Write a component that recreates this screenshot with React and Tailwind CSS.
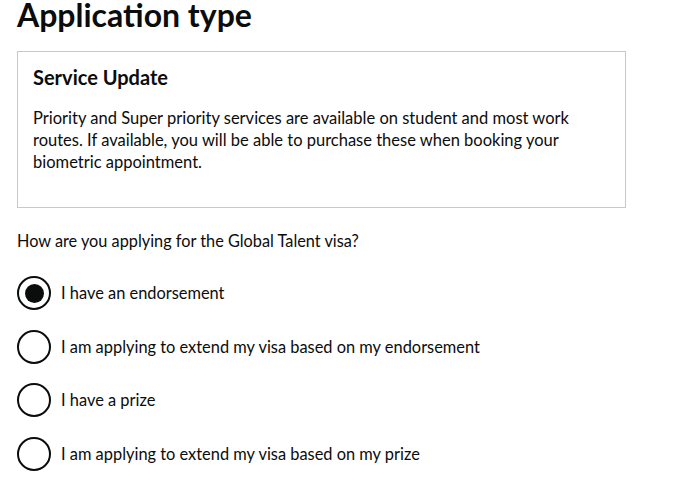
export default function App() {
  const options = [
    { label: "I have an endorsement", checked: true },
    { label: "I am applying to extend my visa based on my endorsement" },
    { label: "I have a prize" },
    { label: "I am applying to extend my visa based on my prize" },
  ];
  return (
    <div className="w-[690px] h-[497px] bg-white text-[#0b0c0c] overflow-hidden" style={{ fontFamily: 'Lato, Arial, sans-serif' }}>
      <div className="pl-[17px] pr-[64px]">
        <h1 className="text-[32px] font-bold leading-[36px] -mt-[3px]">Application type</h1>
        <div className="mt-[18px] w-[609px] h-[157px] border-[1.5px] border-[#c8c8c8] px-[15px] pt-[13px]">
          <h2 className="text-[20px] font-bold leading-[24px]">Service Update</h2>
          <p className="mt-[18px] text-[16.5px] leading-[22px] w-[560px]">
            Priority and Super priority services are available on student and most work routes. If available, you will be able to purchase these when booking your biometric appointment.
          </p>
        </div>
        <p className="mt-[21px] text-[16.3px] leading-[24px]">How are you applying for the Global Talent visa?</p>
        <div className="mt-[23px] flex flex-col gap-[19.5px]">
          {options.map((o) => (
            <label key={o.label} className="flex items-center gap-[10px]">
              <span className="w-[34px] h-[34px] rounded-full border-2 border-[#0b0c0c] flex items-center justify-center shrink-0">
                {o.checked && <span className="w-[19px] h-[19px] rounded-full bg-[#0b0c0c]" />}
              </span>
              <span className="text-[16.4px] leading-[24px]">{o.label}</span>
            </label>
          ))}
        </div>
      </div>
    </div>
  );
}
